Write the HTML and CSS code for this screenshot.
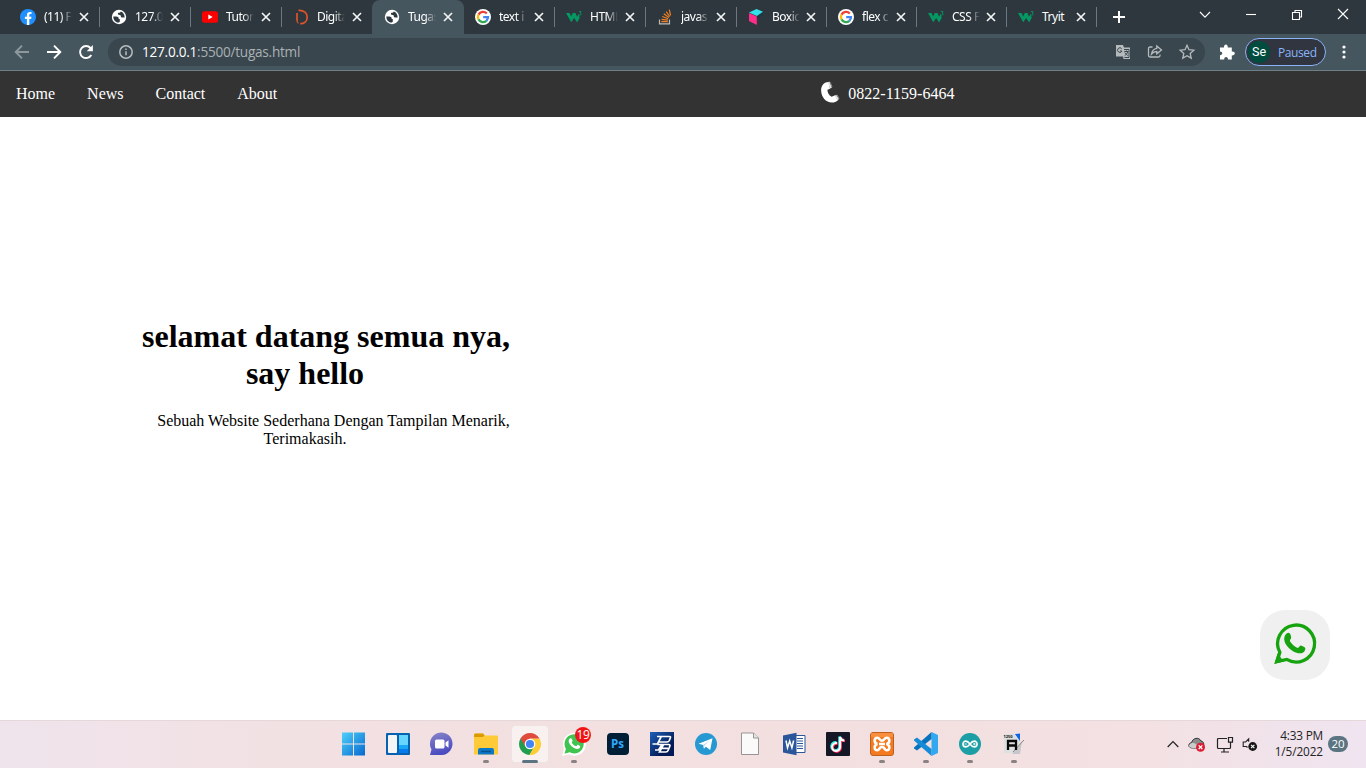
FILE: index.html
```html
<!DOCTYPE html>
<html lang="id">
<head>
<meta charset="utf-8">
<title>Tugas</title>
<link rel="stylesheet" href="styles.css">
</head>
<body>
<svg class="defs" width="0" height="0">
  <defs>
    <symbol id="x" viewBox="0 0 10 10"><path d="M1 1l8 8M9 1L1 9" stroke="#f2f4f5" stroke-width="1.700" fill="none"/></symbol>
    <symbol id="globe" viewBox="0 0 16 16"><circle cx="8" cy="8" r="7.200" fill="#fff"/><path d="M2.300 7.500h3c1.500 0 2.300.8 2.300 1.700 0 .7.600.9 1.200.9v2.600c-.8.900-1.700.9-2.600.7C3.700 12.600 2.200 10.300 2.300 7.500zM9.800 2.500c-.3 1-1 1.300-1.900 1.300-.8 0-1 .5-1 1.300 0 .6.600.8 1.600.8 1.100 0 1.300.6 1.300 1.400 0 .9.800 1.200 1.700 1.200h2.200C13.700 5.600 12.200 3.200 9.800 2.500z" fill="#2f3a40"/></symbol>
    <symbol id="google" viewBox="0 0 16 16"><circle cx="8" cy="8" r="8" fill="#fff"/><g fill="none" stroke-width="2.300"><path d="M11.800 4.500A5.100 5.100 0 0 0 3.500 5.600" stroke="#ea4335"/><path d="M3.500 5.600a5.100 5.100 0 0 0 0 4.800" stroke="#fbbc05"/><path d="M3.500 10.400a5.100 5.100 0 0 0 7.900 1.400" stroke="#34a853"/><path d="M11.400 11.800A5 5 0 0 0 13 8.100H8.200" stroke="#4285f4"/></g></symbol>
    <symbol id="w3" viewBox="0 0 16 16"><path d="M0 4h3.600l1.500 3.600L6.800 4h2.700l1.500 3.800L12.600 5l1.100 3.700-2.600 4.800L8.200 9l-3 4.300z" fill="#059862"/><path d="M12.800 2.600h2.300l-1 1.300c1.600.3 1.300 2.200-.1 2.200-.6 0-1-.2-1.300-.6" fill="none" stroke="#059862" stroke-width=".9"/></symbol>
  </defs>
</svg>

<div class="tabstrip">
  <div class="tabs">
    <div class="tab"><svg class="fav" viewBox="0 0 16 16"><circle cx="8" cy="8" r="8" fill="#1e90ff"/><path d="M6.900 16V10H4.900V7.700h2V6c0-2 1.200-3.100 3-3.100l1.600.1v2h-1C9.600 5 9.300 5.500 9.300 6.200v1.500h2.200l-.4 2.300H9.300v6z" fill="#fff"/></svg><span class="title">(11) F</span><svg class="close"><use href="#x"/></svg></div>
    <div class="tab"><svg class="fav"><use href="#globe"/></svg><span class="title">127.0</span><svg class="close"><use href="#x"/></svg></div>
    <div class="tab"><svg class="fav" viewBox="0 0 16 16"><rect y="2.300" width="16" height="11.500" rx="2.500" fill="#f00"/><path d="M6.300 5.500v5L10.700 8z" fill="#fff"/></svg><span class="title">Tutor</span><svg class="close"><use href="#x"/></svg></div>
    <div class="tab noline"><svg class="fav" viewBox="0 0 16 16"><path d="M4 4v7.500M5.500 1.300C11 1 14.300 4 14.200 8.300c0 4-3 6.600-7 6.400" fill="none" stroke="#e0542a" stroke-width="1.700"/><path d="M4 11c0 1.500.5 2.600 1.300 3.400" fill="none" stroke="#e0542a" stroke-width="1.200"/></svg><span class="title">Digita</span><svg class="close"><use href="#x"/></svg></div>
    <div class="tab active noline"><svg class="fav"><use href="#globe"/></svg><span class="title">Tugas</span><svg class="close"><use href="#x"/></svg></div>
    <div class="tab"><svg class="fav"><use href="#google"/></svg><span class="title">text i</span><svg class="close"><use href="#x"/></svg></div>
    <div class="tab"><svg class="fav"><use href="#w3"/></svg><span class="title">HTML</span><svg class="close"><use href="#x"/></svg></div>
    <div class="tab"><svg class="fav" viewBox="0 0 16 16"><path d="M2.500 10.500v4.300h10v-4.300" fill="none" stroke="#bcbbbb" stroke-width="1.200"/><path d="M4.300 12.700h6.500M4.500 10.300l6.400.9M5.200 7.500l6 2.300M6.800 4.700l5.200 3.700M9.200 2.700l3.600 4.800M12.300.7l1.300 5.700" stroke="#f48024" stroke-width="1.200"/></svg><span class="title">javas</span><svg class="close"><use href="#x"/></svg></div>
    <div class="tab"><svg class="fav" viewBox="0 0 16 16"><path d="M1 3.500L8.500 0 15 2.800 8.800 7z" fill="#32e0e8"/><path d="M1 4l7.800 3.400V16L1 12z" fill="#ff2e88"/><path d="M9.300 7.400L15 3.500v2.800L9.300 10z" fill="#173b48"/></svg><span class="title">Boxic</span><svg class="close"><use href="#x"/></svg></div>
    <div class="tab"><svg class="fav"><use href="#google"/></svg><span class="title">flex c</span><svg class="close"><use href="#x"/></svg></div>
    <div class="tab"><svg class="fav"><use href="#w3"/></svg><span class="title">CSS F</span><svg class="close"><use href="#x"/></svg></div>
    <div class="tab"><svg class="fav"><use href="#w3"/></svg><span class="title full">Tryit</span><svg class="close"><use href="#x"/></svg></div>
  </div>
  <svg class="plus" viewBox="0 0 12 12"><path d="M6 0v12M0 6h12" stroke="#fff" stroke-width="2"/></svg>
  <div class="winbtns">
    <svg viewBox="0 0 12 12"><path d="M1 3l5 5.200L11 3" /></svg>
    <svg viewBox="0 0 12 12"><path d="M1 5.500h10"/></svg>
    <svg viewBox="0 0 12 12"><path d="M1.500 3.500h7v7h-7zM4 3.500v-2h6.500V8h-2"/></svg>
    <svg viewBox="0 0 12 12"><path d="M1 0l10 10M11 0L1 10"/></svg>
  </div>
</div>

<div class="toolbar">
  <svg class="nav dim" viewBox="0 0 16 16"><path d="M15 8H2M8 1.700L1.700 8 8 14.300"/></svg>
  <svg class="nav" viewBox="0 0 16 16"><path d="M1 8h13M8 1.700L14.300 8 8 14.300"/></svg>
  <svg class="nav" viewBox="0 0 16 16"><path d="M13.300 11A6 6 0 1 1 12.500 4l1.200 1.300"/><path d="M14.900 1v6.300H8.700z" class="solid"/></svg>
  <div class="address">
    <svg class="info" viewBox="0 0 14 14"><circle cx="7" cy="7" r="6.200"/><path d="M7 6.300v4M7 3.500V5"/></svg>
    <span class="url"><b>127.0.0.1</b>:5500/tugas.html</span>
    <div class="actions">
      <svg viewBox="0 0 16 16"><path d="M1 1h7l1 2.500h6V15H8.500L8 12.500H1z" fill="#b5babd"/><path d="M6.700 4.700A2.300 2.300 0 1 0 7 7H5M9 5.500h5v8H9.500M9.300 7.500h4M11.500 6.500v1M12.700 7.700c-.5 2-1.500 3-3 4M9.800 8.500l3 3.200" stroke="#39464d" fill="none"/></svg>
      <svg viewBox="0 0 16 16" class="line"><path d="M5.500 3H3q-1.500 0-1.500 1.500v7Q1.500 13 3 13h8.500q1.500 0 1.500-1.500V10.500M9.800 2l4.700 4-4.700 3.800V7.500C7.300 7.500 5.800 8.500 4.500 10 5 7 6.500 4.800 9.800 4.300z"/></svg>
      <svg viewBox="0 0 16 16" class="line"><path d="M8 1.300l2 4.400 4.800.5-3.600 3.200 1 4.700L8 11.700l-4.200 2.400 1-4.700-3.600-3.200L6 5.700z"/></svg>
    </div>
  </div>
  <svg class="puzzle" viewBox="0 0 16 16"><path d="M1 3.500h4c-.3-4 4-4 3.800 0h4v4c4-.3 4 4.100 0 3.900v4H9c.1-3.300-4-3.300-3.800 0H1v-4.100c3-.2 3-3.600 0-3.700z" fill="#fff"/></svg>
  <div class="profile"><span class="avatar">Se</span><span class="paused">Paused</span></div>
  <svg class="dots" viewBox="0 0 4 14"><circle cx="2" cy="2" r="1.600"/><circle cx="2" cy="7" r="1.600"/><circle cx="2" cy="12" r="1.600"/></svg>
</div>

<nav class="navbar">
  <a>Home</a><a>News</a><a>Contact</a><a>About</a>
  <div class="phone"><svg viewBox="0 0 20 23"><path d="M8.500 1C4 1 .7 4.700.7 9.500c0 7.500 5 13 11.300 13 2.400 0 4.700-.8 6.300-2.500l-3-5.200-3.600 1.700C8.800 15 7.300 12 7.300 9.200L10 8z"/><path d="M8.500 1l2.500 6.500M18.500 19.500l-2.700-4.700" stroke="#e4e4e4" stroke-width="2"/><path d="M10.200 1.300l2 5M19.600 18.300l-2.200-3.700" stroke="#8d8d8d" stroke-width="1"/></svg><span>0822-1159-6464</span></div>
</nav>

<main class="page">
  <section class="hero">
    <h1>selamat datang semua nya,<br>say hello</h1>
    <p>Sebuah Website Sederhana Dengan Tampilan Menarik,<br>Terimakasih.</p>
  </section>
  <a class="wa"><svg viewBox="0 0 44 44"><path d="M4 40.500l3-9.500A18.900 18.900 0 1 1 14 38.300z" fill="none" stroke="#17a30f" stroke-width="3.400"/><path d="M1.300 43l3.500-11 4 5.500 5.500 2z" fill="#17a30f"/><path d="M14 11.700c2-1.300 3.400-.3 4 1.600.6 1.900 1 3 0 4.200-1.200 1.300-.6 2.500.7 4.100 1.800 2.300 3.600 3.700 5.800 4.700 1.200.5 1.700-.1 2.700-1.500.8-1.200 1.800-.6 3.300.1 2 1 2.900 1.400 2.500 3.200-.7 3.100-4.200 4.500-7.200 3.800-7-1.600-12.500-7.200-14-12.300-.9-3.200.2-6.600 2.200-7.900z" fill="#17a30f"/></svg></a>
</main>

<footer class="taskbar">
  <div class="apps">
    <div class="app"><svg viewBox="0 0 24 24"><defs><linearGradient id="win" x2="1" y2="1"><stop stop-color="#4fd0fb"/><stop offset="1" stop-color="#0669cf"/></linearGradient></defs><path d="M0 .500h11v11H0zM12 .500h11v11H12zM0 12.500h11v11H0zM12 12.500h11v11H12z" fill="url(#win)"/></svg></div>
    <div class="app"><svg viewBox="0 0 24 24"><rect y="1" width="24" height="22" rx="1" fill="#0763b1"/><rect x="2" y="3" width="9" height="18" rx="1" fill="#f6f6f6"/><path d="M13 3h9v10h-9z" fill="#66d5ff"/><path d="M13 13h9v4h-9z" fill="#18a8f5"/><path d="M13 17h9v4h-9z" fill="#087bea"/></svg></div>
    <div class="app"><svg viewBox="0 0 24 24"><defs><linearGradient id="chat" x2=".3" y2="1"><stop stop-color="#8a85c8"/><stop offset="1" stop-color="#4a4cc0"/></linearGradient></defs><path d="M0 23l1.500-5.500A11.300 11.300 0 1 1 12 23z" fill="url(#chat)"/><rect x="5" y="7.500" width="9.500" height="9" rx="1.500" fill="#fff"/><path d="M15.500 10.500l3-2.300v7.600l-3-2.300z" fill="#fff"/></svg></div>
    <div class="app run"><svg viewBox="0 0 24 24"><path d="M0 3.500Q0 1.500 1.500 1.500H9l2 2h12q1 0 1 1v18H0z" fill="#ffca38"/><path d="M0 3.500Q0 1.500 1.500 1.500H9l1.500 1.800L9 5H0z" fill="#d99b00"/><path d="M4 22.500V18q0-2 2-2h12q2 0 2 2v4.500z" fill="#0c78c8"/><path d="M7 19.500h10" stroke="#07528f" stroke-width="1.500"/></svg></div>
    <div class="app focus"><svg viewBox="0 0 24 24"><path d="M2.500 6.500A11 11 0 0 0 11.500 23l5-8.500-4.500-2.500z" fill="#229d50"/><path d="M21.500 6.500A11 11 0 0 1 11.500 23l5-9-4.500-7.500z" fill="#fdcd33"/><path d="M2.500 6.500L7 14l5-7.500h9.500A11 11 0 0 0 2.500 6.500z" fill="#df4a3d"/><circle cx="12" cy="12" r="5.300" fill="#fff"/><circle cx="12" cy="12" r="4.100" fill="#4385f4"/></svg></div>
    <div class="app run"><svg viewBox="0 0 24 24"><path d="M0 24l2-7A11.500 11.500 0 1 1 7 22.300z" fill="#fff"/><path d="M2.500 21.700l1.400-4.900A9.600 9.600 0 1 1 7.600 20.300z" fill="#40c351"/><path d="M8 6.500c1-.7 1.500-.3 2 .8.600 1.400.8 1.700.1 2.500-.6.700-.4 1 .4 2 1 1.200 2 1.900 3.200 2.300.7.200.9-.2 1.400-.9.500-.6.900-.4 1.700 0 1.300.6 1.600.8 1.400 1.800-.5 1.500-2 2.200-3.500 1.900-3.700-.8-7.400-4.300-8-7.200-.2-1.300.4-2.600 1.300-3.200z" fill="#fff"/></svg><span class="badge">19</span></div>
    <div class="app"><svg viewBox="0 0 24 24"><rect x="1" y="1" width="22" height="22" rx="4" fill="#001e36"/><text x="5" y="16" class="ps">Ps</text></svg></div>
    <div class="app"><svg viewBox="0 0 24 24"><defs><linearGradient id="pb" x2="1" y2="1"><stop stop-color="#1d62ba"/><stop offset=".7" stop-color="#041a55"/></linearGradient></defs><path d="M0 0h24v24H0z" fill="url(#pb)"/><path d="M7 4.500h12.500q1.500 0 .8 1.500l-1 2.500q-.7 1.500-2.300 1.500H9M11 5L7.500 12H2.500M5 18h3.500L12 12.500M7.500 12.500h11q2 0 1.300 1.700l-1.600 4q-.7 1.800-2.500 1.800H9.500l4-7.500M12.500 16.300h5.500" fill="none" stroke="#fff" stroke-width="1.700"/></svg></div>
    <div class="app"><svg viewBox="0 0 24 24"><circle cx="12" cy="12" r="11" fill="#2799d2"/><path d="M4.500 11.800L18.500 6.300 16.200 18l-4.300-3.200-2 2-.6-3.700z" fill="#fff"/><path d="M9.300 13l6.200-4.500-5 5-.6 3z" fill="#b9d9ea"/></svg></div>
    <div class="app"><svg viewBox="0 0 24 24"><path d="M3.500 1h12l5 5v16.500h-17z" fill="#fafafa" stroke="#979594"/><path d="M15.500 1v5h5" fill="#e5e5e5" stroke="#979594"/></svg></div>
    <div class="app"><svg viewBox="0 0 24 24"><path d="M13 3.500h10v17H13z" fill="#fff" stroke="#2b579a"/><path d="M15 6.500h6M15 9h6M15 11.500h6M15 14h6M15 16.500h6" stroke="#2b579a"/><path d="M1 3.500L14.500.7v22.600L1 20.500z" fill="#2b579a"/><path d="M4 8.500l1.500 7.300L7.700 9l2.200 6.800 1.700-7.300" fill="none" stroke="#fff" stroke-width="1.500"/></svg></div>
    <div class="app"><svg viewBox="0 0 24 24"><rect width="24" height="24" rx="1" fill="#151726"/><g fill="none" stroke-width="2.600"><path d="M10.300 10.500a4 4 0 1 0 3.200 4V4.500c.6 2.200 2 3.400 4.300 3.600" stroke="#25f4ee"/><path d="M11.700 11.700a4 4 0 1 0 3 4V5.300c.5 2.200 2 3.600 4.300 3.700" stroke="#fe2c55"/><path d="M11 11.200a4 4 0 1 0 3.100 4V5c.5 2.200 2 3.500 4.200 3.600" stroke="#fff" stroke-width="2"/></g></svg></div>
    <div class="app run"><svg viewBox="0 0 24 24"><rect x=".5" y=".5" width="23" height="23" rx="2.500" fill="#f47a20" stroke="#bd6020"/><path d="M1 1h22v4H1z" fill="#fa9b53" opacity=".6"/><path d="M9 12h6M7.500 12C3.500 11 4 5.700 7.300 5.700c2.400 0 2.400 3 4.700 3s2.300-3 4.700-3C20 5.700 20.500 11 16.500 12c4 1 3.500 6.300.2 6.300-2.400 0-1.700-3.300-4.700-3.300s-2.300 3.300-4.700 3.300C4 18.300 3.500 13 7.500 12" fill="none" stroke="#fff" stroke-width="2.600"/></svg></div>
    <div class="app run"><svg viewBox="0 0 24 24"><path d="M17.500 0L24 3v18l-6.500 3z" fill="#32a8f0"/><path d="M17.500 0v7L3 18.500 0 16.500v-1z" fill="#0873bd"/><path d="M0 8.500v-1L3 5.500 17.500 17v7z" fill="#168bd7"/></svg></div>
    <div class="app run"><svg viewBox="0 0 24 24"><circle cx="12" cy="12" r="11" fill="#1b9fa5"/><path d="M12 12c-1.500-2-2.500-2.900-4.200-2.900a2.900 2.900 0 0 0 0 5.800C9.500 14.900 10.500 14 12 12c1.500-2 2.500-2.900 4.200-2.900a2.900 2.900 0 0 1 0 5.800c-1.700 0-2.700-.9-4.200-2.900z" fill="none" stroke="#fff" stroke-width="1.600"/><path d="M6.500 12h2.300M15.200 12h2.300M16.300 10.900v2.200" stroke="#fff" stroke-width=".9"/></svg></div>
    <div class="app run"><svg viewBox="0 0 24 24"><path d="M2 2h13l3 3v16H2z" fill="#dedfe1"/><path d="M13 2l5-.5v7.500z" fill="#0b63e5"/><path d="M10 22l10-13-2 13z" fill="#c6c7ca"/><path d="M11 20L22 8" stroke="#888"/><path d="M6 18V9h8v9M6 13.500h8" fill="none" stroke="#080808" stroke-width="2.300"/><text x="1.500" y="6" class="micro">1250</text></svg></div>
  </div>
  <div class="tray">
    <svg class="chev" viewBox="0 0 12 8"><path d="M.7 7L6 1.500 11.300 7" fill="none" stroke="#222" stroke-width="1.200"/></svg>
    <svg class="cloud" viewBox="0 0 18 16"><path d="M4.500 12C-.5 12 0 7 3.700 6.500 4.500 2 11 .5 13 5c3 .3 4 5 1 7z" fill="#8b8b8b" stroke="#333"/><path d="M1 9.500c2-3 4-3.500 6-2L13.500 12h-9C2.500 12 1 11 1 9.500z" fill="#ccc"/><circle cx="12.500" cy="11.200" r="4.500" fill="#dc1f35"/><path d="M10.700 9.400l3.600 3.600M14.300 9.400L10.700 13" stroke="#fff" stroke-width="1.300"/></svg>
    <svg class="net" viewBox="0 0 17 17"><path d="M11 2.500H2.500q-1 0-1 1v8q0 1 1 1h11q1 0 1-1V8M8 12.500V16M5 16h8M13 1.500h3.500v4.700h-4V1.500zM14.500 6v2" fill="none" stroke="#222" stroke-width="1.200"/></svg>
    <svg class="vol" viewBox="0 0 16 14"><path d="M5.500 10.500L4.500 9.500H1.200V5h2.500l3-3.200v3" fill="none" stroke="#222" stroke-width="1.100"/><circle cx="10.700" cy="9.500" r="4.400" fill="#161616"/><path d="M9 7.800l3.400 3.400M12.400 7.800L9 11.200" stroke="#fff" stroke-width="1.100"/></svg>
    <div class="clock"><span>4:33 PM</span><span class="date">1/5/2022</span></div>
    <span class="count">20</span>
  </div>
</footer>
</body>
</html>
```
FILE: styles.css
```css
* { box-sizing: border-box; }
body { margin: 0; width: 1366px; height: 768px; overflow: hidden; display: flex; flex-direction: column; background: #fff; font-family: "Liberation Serif", serif; }
svg { display: block; flex: none; overflow: visible; }
.defs { display: none; }

.tabstrip { height: 34px; flex: none; display: flex; align-items: center; background: #2d373d; padding-left: 9px; font-family: "Noto Sans", sans-serif; }
.tabs { display: flex; height: 34px; }
.tab { position: relative; width: 91px; height: 34px; padding-left: 11px; display: flex; align-items: center; }
.tab:nth-child(n+9) { width: 90px; }
.tab::after { content: ""; position: absolute; right: 0; top: 7px; width: 1px; height: 20px; background: #6d777d; }
.tab.noline::after { display: none; }
.tab.active::before { content: ""; position: absolute; inset: 0 0 0 -1px; z-index: -1; background: #46565f; border-radius: 8px 8px 0 0; }
.tab.active { z-index: 0; }
.fav { width: 16px; height: 16px; }
.title { width: 28px; margin-left: 8px; white-space: nowrap; color: #fff; font-size: 12px; line-height: 18px; letter-spacing: -.5px; -webkit-mask-image: linear-gradient(90deg, #000 60%, transparent); mask-image: linear-gradient(90deg, #000 60%, transparent); }
.title.full { -webkit-mask-image: none; mask-image: none; }
.close { width: 10px; height: 10px; margin-left: 7px; }
.tab:nth-child(n+9) .close { margin-left: 6px; }
.plus { width: 12px; height: 12px; margin-left: 16px; }
.winbtns { display: flex; gap: 34px; margin: -5px 17px 0 auto; }
.winbtns svg { width: 12px; height: 12px; }
.winbtns path { fill: none; stroke: #fff; stroke-width: 1.1; }

.toolbar { height: 37px; flex: none; display: flex; align-items: center; background: #46565f; border-bottom: 1px solid #6f7f87; padding-left: 14px; font-family: "Open Sans", sans-serif; }
.nav { width: 16px; height: 16px; margin-right: 16px; fill: none; stroke: #fff; stroke-width: 1.9; }
.nav .solid { fill: #fff; stroke: none; }
.nav.dim { stroke: #8e999e; }
.address { width: 1097px; height: 28px; margin-left: -2px; border-radius: 14px; background: #39464d; display: flex; align-items: center; padding-left: 11px; }
.info { width: 14px; height: 14px; fill: none; stroke: #b7bdc0; stroke-width: 1.5; }
.url { margin: -1px 0 0 9px; color: #a9b1b5; font-size: 13.6px; white-space: nowrap; letter-spacing: -.25px; }
.url b { color: #fff; font-weight: 400; }
.actions { display: flex; gap: 16px; margin: 0 10px 0 auto; }
.actions svg { width: 16px; height: 16px; }
.line { fill: none; stroke: #b5babd; stroke-width: 1.3; }
.puzzle { width: 16px; height: 16px; margin-left: 14px; }
.profile { width: 81px; height: 28px; margin-left: 10px; border: 1px solid #8ab4f8; border-radius: 14px; background: #303540; display: flex; align-items: center; padding-left: 2px; }
.avatar { width: 22px; height: 22px; border-radius: 50%; background: #004d40; color: #fff; font: 12.5px/22px Roboto, sans-serif; text-align: center; }
.paused { margin-left: 8px; color: #8ab4f8; font-size: 12px; letter-spacing: -.4px; }
.dots { width: 4px; height: 14px; margin-left: 16px; fill: #fff; }

.navbar { height: 46px; flex: none; display: flex; align-items: center; background: #333; color: #fff; font-size: 16px; }
.navbar a { padding: 0 16px; }
.phone { display: flex; align-items: center; margin-left: 527px; }
.phone svg { width: 20px; height: 22px; margin: -5px 8px 0 0; fill: #fff; }

.page { position: relative; flex: 1; }
.hero { width: 410px; margin-left: 100px; padding-top: 201px; text-align: center; white-space: nowrap; }
.hero h1 { margin: 0; font-size: 32px; line-height: 37px; text-indent: 42px; }
.hero p { margin: 20px 0 0; font-size: 16px; line-height: 18px; text-indent: 57px; }
.wa { position: absolute; right: 36px; bottom: 40px; width: 70px; height: 70px; border-radius: 25px; background: #f0f0f1; display: flex; align-items: center; justify-content: center; }
.wa svg { width: 43px; height: 43px; margin: -3px 2px 0 0; }

.taskbar { height: 48px; flex: none; display: flex; justify-content: space-between; padding-left: 332px; border-top: 1px solid #e6d7da; background: linear-gradient(90deg, #efe4ec 0%, #f2e1e3 20%, #f3dfdf 60%, #f3e1e3 84%, #efe4f0 100%); color: #222; }
.apps { display: flex; }
.app { position: relative; width: 44px; height: 47px; display: flex; align-items: center; justify-content: center; padding-bottom: 1px; }
.app svg { width: 24px; height: 24px; z-index: 1; }
.app.run::after { content: ""; position: absolute; left: 19px; bottom: 5px; width: 6px; height: 3px; border-radius: 2px; background: #8a8282; }
.app.focus::before { content: ""; position: absolute; inset: 4px 3px 5px; border-radius: 4px; background: #f9f0f0; border: 1px solid #eee2e3; }
.app.focus::after { content: ""; position: absolute; left: 14px; bottom: 5px; width: 16px; height: 3px; border-radius: 2px; background: #5c7482; }
.badge { position: absolute; z-index: 2; left: 23px; top: 6px; width: 16px; height: 16px; border-radius: 50%; background: #f01515; color: #fff; font: 12px/16px "Open Sans", sans-serif; text-align: center; letter-spacing: -.4px; }
.ps { font: bold 11.5px "Open Sans", sans-serif; fill: #31a8ff; }
.micro { font: bold 4px "Open Sans", sans-serif; fill: #111; }
.tray { display: flex; align-items: center; font-family: "Open Sans", sans-serif; padding: 0 18px 1px 0; }
.chev { width: 12px; height: 8px; }
.cloud { width: 18px; height: 16px; margin-left: 9px; }
.net { width: 17px; height: 17px; margin-left: 10px; }
.vol { width: 16px; height: 14px; margin-left: 9px; }
.clock { width: 65px; display: flex; flex-direction: column; text-align: right; font-size: 11.8px; line-height: 16px; letter-spacing: -.2px; margin-top: -2px; }
.date { letter-spacing: -.1px; }
.count { width: 20px; height: 16px; margin-left: 5px; border-radius: 8px; background: #5b7482; color: #fff; font-size: 11.5px; line-height: 16px; text-align: center; }
```
